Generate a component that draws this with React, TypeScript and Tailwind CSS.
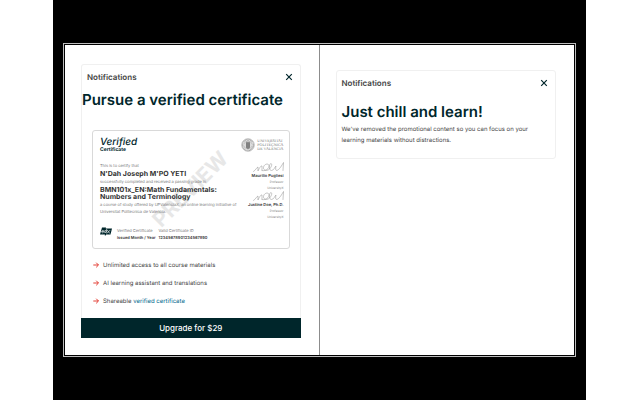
import React from "react";

function CloseIcon() {
  return (
    <svg viewBox="0 0 8 8" className="block size-2" fill="none" stroke="#00262b" strokeWidth="1.2">
      <path d="M1.2 1.2 6.8 6.8M6.8 1.2 1.2 6.8" />
    </svg>
  );
}

function NotificationHeader() {
  return (
    <header className="flex h-[23px] items-center justify-between pl-[5px] pr-[7px]">
      <h2 className="text-[8px] leading-3 font-semibold text-[#454545]">Notifications</h2>
      <button type="button" aria-label="Close notifications">
        <CloseIcon />
      </button>
    </header>
  );
}

function Signature() {
  return (
    <svg viewBox="0 0 31 11" className="block h-[11px] w-[31px]" fill="none" stroke="#8f8f8f" strokeWidth="0.5" strokeLinecap="round" strokeLinejoin="round">
      <path d="M.5 9.500C2.500 8.500 4 5 5 5v4C6 7 7.500 3.500 9 4v4.500" />
      <path d="M9 8.500C10 9.500 16 8 16 4c0-3-5-2.500-5.500 1.500-.3 3 3.500 4 6 1.500 2-2 3-5 1.500-5.500-2 0-2.500 7 .5 7C21 8.500 22 4.500 23 4c-.5 2-.5 4.500.5 4.500C26 8.500 29 3 30.500.5L30 8.500" />
    </svg>
  );
}

function Signer({ name }: { name: string }) {
  return (
    <div className="flex flex-col items-end">
      <Signature />
      <p className="text-[4px] leading-[6px] font-semibold text-[#333]">{name}</p>
      <p className="text-[3px] leading-[6px]">Professor</p>
      <p className="text-[3px] leading-[6px]">UniversityX</p>
    </div>
  );
}

function UniversityLogo() {
  return (
    <div className="flex items-center gap-0.5 text-[#777]">
      <svg viewBox="0 0 28 28" className="block size-[14px]" fill="none" stroke="currentColor">
        <circle cx="14" cy="14" r="12.500" strokeWidth="1" />
        <circle cx="14" cy="14" r="10.500" strokeWidth="3" strokeDasharray="1.500 1" opacity=".65" />
        <circle cx="14" cy="14" r="8" strokeWidth=".8" />
        <path d="M10 9h8v10l-4 3-4-3z" fill="#888" strokeWidth="1" />
        <path d="M12 8v12M14 7v14M16 8v12M11 7l3-2 3 2" strokeWidth=".8" />
      </svg>
      <p className="font-['Liberation_Serif',serif] text-[4px] leading-[4px]">
        UNIVERSITAT
        <br />
        POLITÈCNICA
        <br />
        DE VALÈNCIA
      </p>
    </div>
  );
}

function EdxLogo() {
  return (
    <svg viewBox="0 0 24 18" className="block h-[9px] w-3" role="img" aria-label="edX">
      <path d="M4 1h8l-.5 2H24l-3 12h-9l-.5 2H9.500l.5-2H0z" fill="#00262b" />
      <g fill="none" stroke="#fff" strokeWidth="1.300">
        <path d="M3.500 9h4c.5-3-3.500-3-4 0-.4 3 2 3 3.500 2M12.500 9c0-3-3.500-2.500-4 0s3 3 4 0M13.500 4 12 12" />
        <path d="m14.500 6 5 7M20.500 6l-7 7" />
      </g>
    </svg>
  );
}

function Certificate() {
  return (
    <section className="relative mx-[10px] h-[119px] overflow-hidden rounded-[3px] border border-[#d9d9d9] px-[7px] pt-[7px] text-[#777]">
      <div aria-hidden="true" className="absolute inset-0 flex items-center justify-center">
        <span className="-rotate-45 text-[21px] leading-6 font-bold text-[#e7e7e7]">PREVIEW</span>
      </div>
      <div className="relative flex flex-col">
        <p className="text-[10px] leading-[9px] font-medium text-[#00262b] italic">Verified</p>
        <p className="text-[5px] leading-[7px] font-bold text-[#00262b]">Certificate</p>
        <p className="mt-[9px] text-[4px] leading-[6px]">This is to certify that</p>
        <p className="text-[7px] leading-[10px] font-bold text-[#333]">N'Dah Joseph M'PO YETI</p>
        <p className="text-[4px] leading-[6px]">successfully completed and received a passing grade in</p>
        <p className="mt-px text-[7px] leading-[7px] font-bold text-[#333]">
          BMN101x_EN:Math Fundamentals:
          <br />
          Numbers and Terminology
        </p>
        <p className="mt-px text-[4px] leading-[7px]">
          a course of study offered by UPValenciaX, an online learning initiative of
          <br />
          Universitat Politecnica de Valencia.
        </p>
        <div className="mt-3 flex text-[4px] leading-[7px]">
          <EdxLogo />
          <p className="ml-[5px]">
            Verified Certificate
            <br />
            <strong className="font-semibold text-[#333]">Issued Month / Year</strong>
          </p>
          <p className="ml-[3px]">
            Valid Certificate ID
            <br />
            <strong className="font-semibold text-[#333]">12345678901234567890</strong>
          </p>
        </div>
      </div>
      <div className="absolute top-[7px] right-[5px] flex flex-col items-end">
        <UniversityLogo />
        <div className="mt-[10px]">
          <Signer name="Maurilio Pugliesi" />
          <Signer name="Justine Doe, Ph.D." />
        </div>
      </div>
    </section>
  );
}

function Benefit({ children }: { children: React.ReactNode }) {
  return (
    <li className="flex h-[18px] items-center gap-1">
      <svg viewBox="0 0 6 6" className="block size-1.5" fill="none" stroke="#e02b20" strokeWidth=".9">
        <path d="M.3 3h5M3.200.7 5.500 3 3.200 5.300" />
      </svg>
      <span>{children}</span>
    </li>
  );
}

function UpgradePanel() {
  return (
    <section className="border-r border-[#8c8c8c] pt-[19px] pr-[18px] pb-[17px] pl-4">
      <div className="rounded-t-[3px] border border-b-0 border-[#f0f0f0]">
        <NotificationHeader />
        <h1 className="text-[15px] leading-6 font-semibold whitespace-nowrap text-[#00262b]">Pursue a verified certificate</h1>
        <div className="mt-[18px]">
          <Certificate />
        </div>
        <ul className="mt-[7px] pb-2 pl-[11px] text-[6px] text-[#454545]">
          <Benefit>Unlimited access to all course materials</Benefit>
          <Benefit>AI learning assistant and translations</Benefit>
          <Benefit>
            Shareable{" "}
            <a href="#certificate" className="text-[#00688d]">
              verified certificate
            </a>
          </Benefit>
        </ul>
      </div>
      <button type="button" className="block h-5 w-full bg-[#00262b] text-[8px] leading-5 font-medium text-white">
        Upgrade for $29
      </button>
    </section>
  );
}

function RelaxPanel() {
  return (
    <section className="pt-[25px] pr-[18px] pl-4">
      <div className="rounded-[3px] border border-[#f0f0f0] pb-3">
        <NotificationHeader />
        <div className="px-[5px] pt-2">
          <h1 className="text-[15px] leading-5 font-semibold text-[#00262b]">Just chill and learn!</h1>
          <p className="mt-0.5 text-[6px] leading-[11px] text-[#454545]">
            We've removed the promotional content so you can focus on your
            <br />
            learning materials without distractions.
          </p>
        </div>
      </div>
    </section>
  );
}

export default function App() {
  return (
    <div className="min-h-screen bg-white pr-[54px] pl-[53px] font-['Inter',sans-serif] [text-rendering:geometricPrecision]">
      <main className="min-h-screen bg-black px-[10px] pt-[43px]">
        <div className="border border-[#bcbcbc] p-px">
          <div className="grid grid-cols-2 bg-white">
            <UpgradePanel />
            <RelaxPanel />
          </div>
        </div>
      </main>
    </div>
  );
}
